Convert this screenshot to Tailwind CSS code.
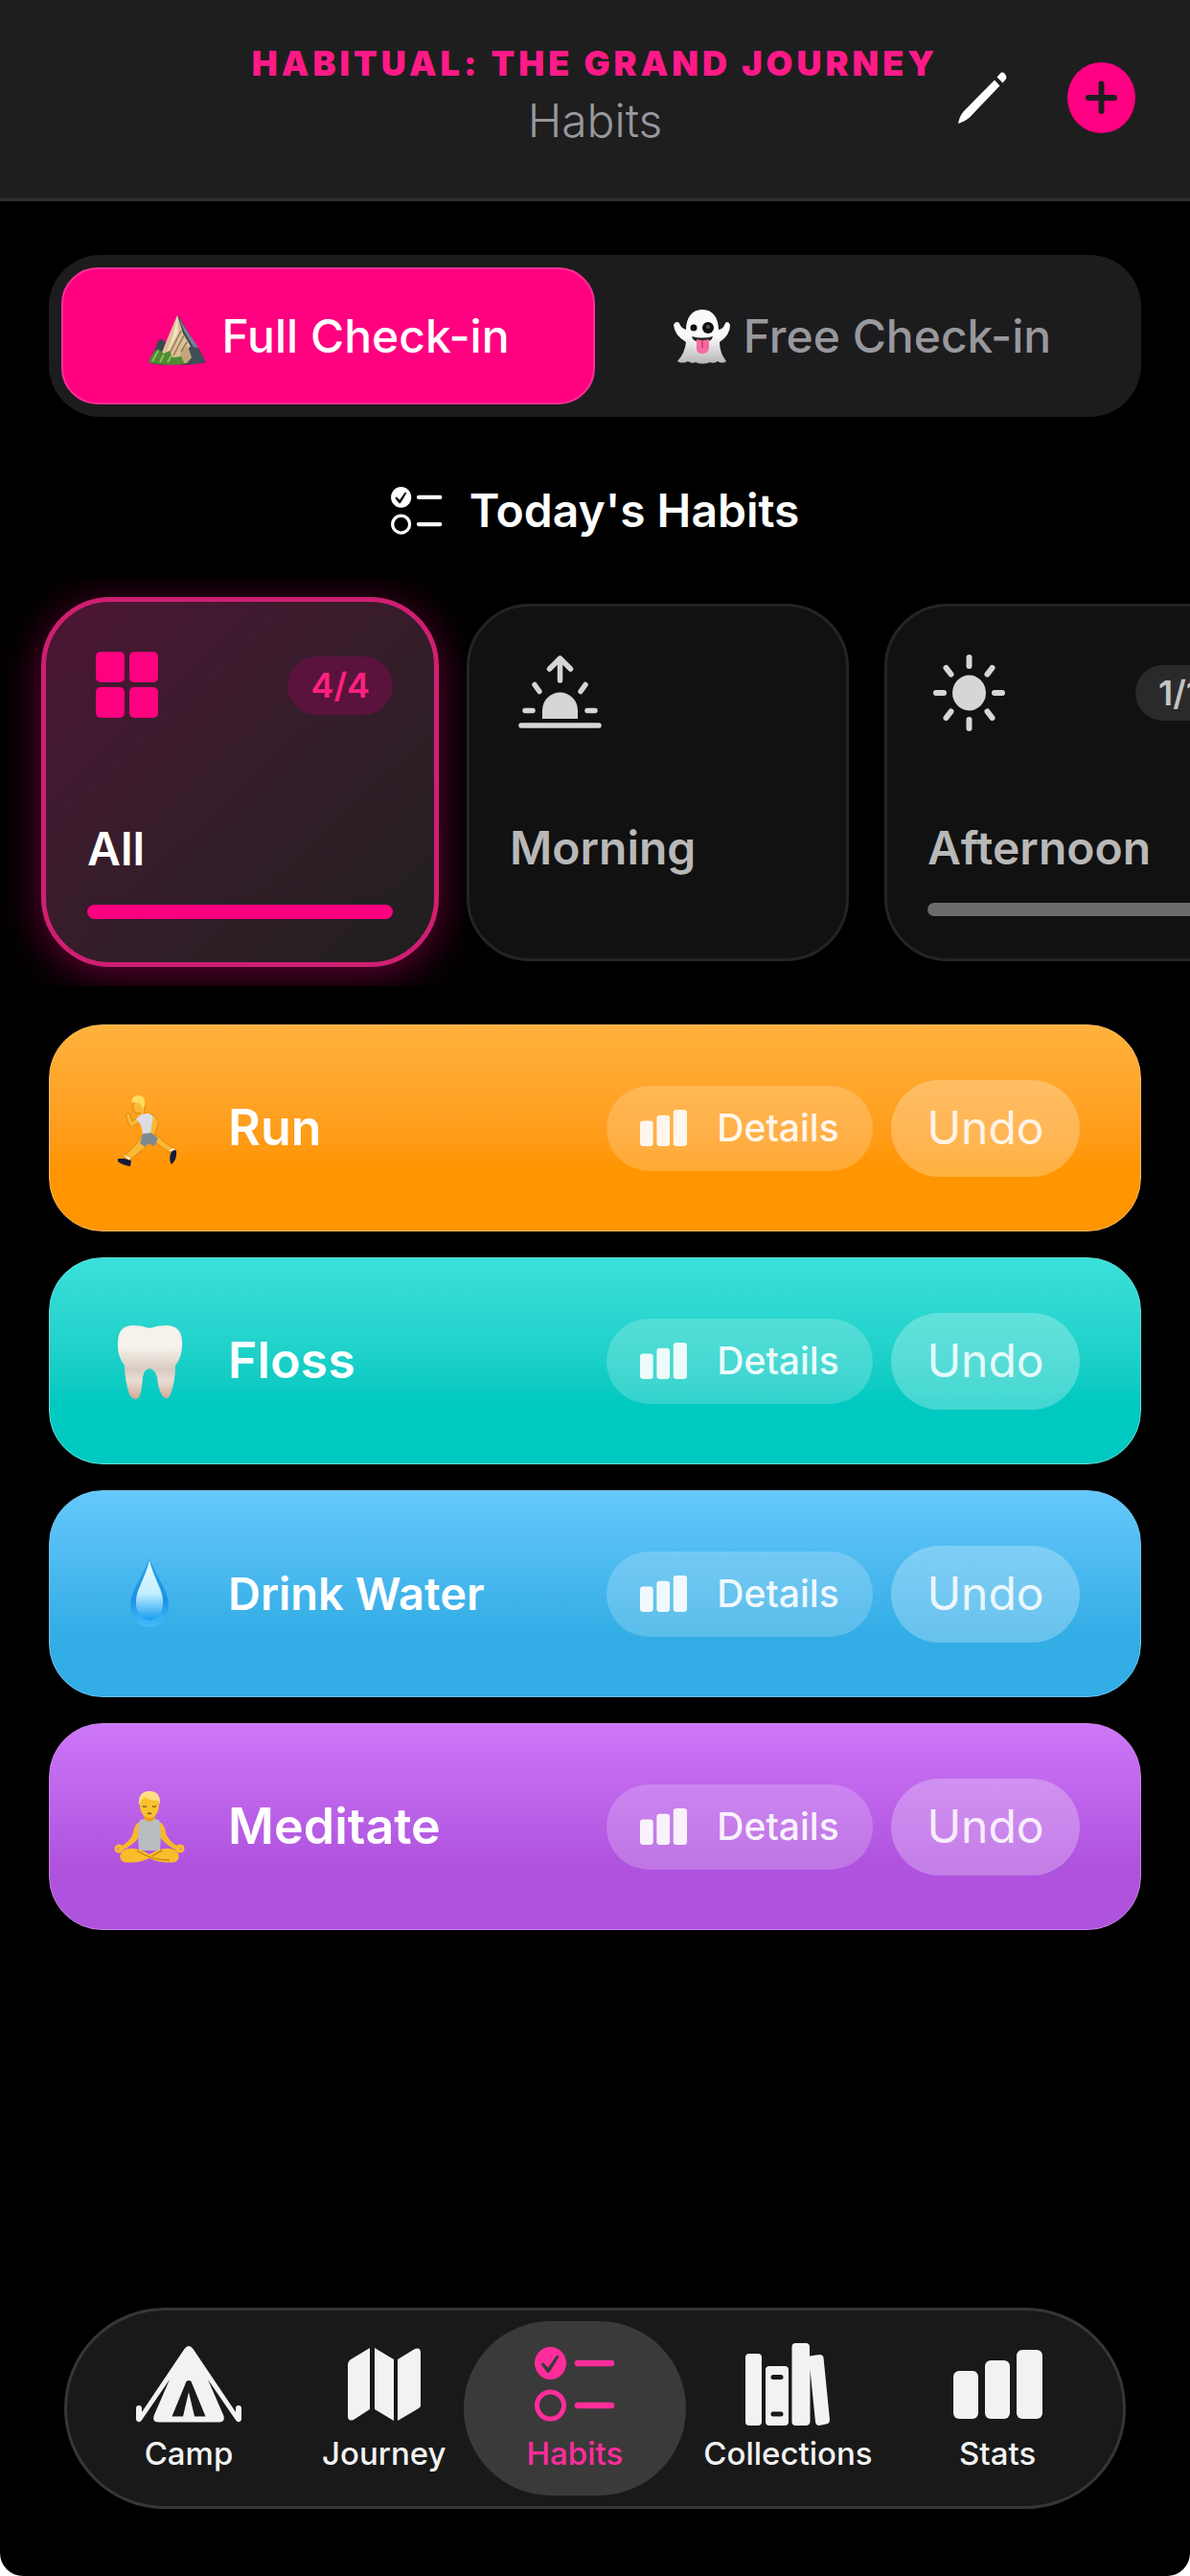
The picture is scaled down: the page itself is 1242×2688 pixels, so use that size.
<!DOCTYPE html>
<html lang="en" class="bg-white">
<head>
    <meta charset="UTF-8">
    <meta name="viewport" content="width=device-width, initial-scale=1.0">
    <title>Habitual - Habits</title>
    <script src="https://cdn.jsdelivr.net/npm/@tailwindcss/browser@4"></script>
</head>
<body class="flex min-h-screen flex-col overflow-x-hidden rounded-b-3xl bg-black font-[Inter,Roboto,sans-serif] text-white">

    <!-- Shared icons -->
    <svg class="hidden" aria-hidden="true">
        <symbol id="icon-bars" viewBox="0 0 93 72">
            <rect y="22" width="26" height="50" rx="6"/>
            <rect x="33" y="11" width="26" height="61" rx="6"/>
            <rect x="66" width="27" height="72" rx="6"/>
        </symbol>
        <symbol id="icon-checklist" viewBox="0 0 84 78">
            <path fill-rule="evenodd" d="M16.500 0a16.500 17 0 1 0 0 34a16.500 17 0 1 0 0-34zM22.500 9.500q1.800-1.600 3 .4L15.800 26q-1.600 1.800-3.200 0L7.200 19q-.6-2.400 1.900-2.600L14 21.500z"/>
            <circle cx="16.500" cy="61" r="14" fill="none" stroke="currentColor" stroke-width="5"/>
            <path d="M45 17h35M45 61h35" fill="none" stroke="currentColor" stroke-width="6.500" stroke-linecap="round"/>
        </symbol>
    </svg>

    <header class="grid grid-cols-[1fr_auto_1fr] items-center border-b-3 border-[#303031] bg-[#1e1e1f] pt-[42px] pb-[45px]">
        <div></div>
        <div class="text-center">
            <p class="text-[36px] leading-[48px] font-black tracking-[4px] text-[#ff1a88]">HABITUAL: THE GRAND JOURNEY</p>
            <h1 class="text-[48px] leading-[72px] font-light text-[#98989d]">Habits</h1>
        </div>
        <div class="flex items-center justify-end gap-[63px] pr-[57px]">
            <button type="button" aria-label="Edit">
                <svg class="h-[54px] w-[51px]" viewBox="0 0 51 54" fill="#fff">
                    <path d="M38 8.500L43.500 14.500L12 47.500Q8 51 0 54Q1.500 46 5.500 41.500z"/>
                    <path d="M40.500 5.500L43.800 1.700Q46.200-.6 48.800 2Q51.500 5 49.500 8L46.500 11.500z"/>
                </svg>
            </button>
            <button type="button" aria-label="Add habit">
                <svg class="h-[74px] w-[71px]" viewBox="0 0 71 74">
                    <ellipse cx="35.500" cy="37" rx="35.500" ry="37" fill="#ff0082"/>
                    <path d="M35.500 22.500v28.500M22 37h27" stroke="#1e1e1f" stroke-width="6" stroke-linecap="round"/>
                </svg>
            </button>
        </div>
    </header>

    <main class="px-[51px] pt-14">
        <!-- Check-in mode -->
        <div class="grid grid-cols-2 rounded-[54px] bg-[#1c1c1e] p-[13px]">
            <button type="button" class="flex h-[143px] items-center justify-center gap-4 rounded-[38px] border-2 border-[#ff2f98] bg-[#ff0080] text-[48px] font-medium">
                <svg class="h-[60px] w-[62px]" viewBox="0 0 62 60">
                    <path d="M2 57L10 40Q12 32 16 33L21 37L32 8L41 22L54 42L62 57Q45 61 30 59Q10 61 2 57z" fill="#3c474c"/>
                    <path d="M32 8L21 34L12 57L32 59L46 40L38 26z" fill="#dcc198"/>
                    <path d="M32 8L33 26L20 50L28 28z" fill="#f4e2c0"/>
                    <path d="M33 8L41 22L62 57Q52 60 40 58L47 42L38 27z" fill="#3f4f55"/>
                    <path d="M33 10L54 42L49 41L39 24z" fill="#73849a"/>
                    <path d="M36 46L43 40L47 52L42 58H32z" fill="#c4a57a"/>
                    <path d="M36 24L24 48M39 29L28 50M42 36L36 46" stroke="#94784f" stroke-width="1.500"/>
                    <path d="M2 57Q6 46 12 43L18 48L24 45L27 52L36 51L40 59Q18 61 2 57z" fill="#4f8a35"/>
                    <path d="M6 56L12 45M14 57L18 49M22 57L26 50" stroke="#8fbf55" stroke-width="2"/>
                </svg>
                Full Check-in
            </button>
            <button type="button" class="flex h-[143px] items-center justify-center gap-3 text-[48px] font-medium text-[#98989d]">
                <svg class="h-[58px] w-[62px]" viewBox="0 0 62 58">
                    <defs>
                        <linearGradient id="ghost" x1="0" y1="0" x2="0" y2="1">
                            <stop offset=".5" stop-color="#fafafa"/>
                            <stop offset="1" stop-color="#b5b5b8"/>
                        </linearGradient>
                    </defs>
                    <path d="M31 1C42 1 48 10 48 22C52 22 54 18 55 15Q58 12 60 17Q60 28 49 35Q49 46 56 55Q52 58 47 55Q43 58 39 56Q31 59 24 56Q20 58 16 55Q10 58 5 55Q13 46 14 35Q2 28 1 17Q3 12 7 15Q8 20 14 22C14 10 20 1 31 1z" fill="url(#ghost)"/>
                    <circle cx="22" cy="20" r="3.500" fill="#111"/>
                    <circle cx="37" cy="20" r="6" fill="#111"/>
                    <circle cx="37" cy="19" r="2" fill="#555"/>
                    <path d="M20 29Q31 32 42 29Q41 35 31 35Q21 35 20 29z" fill="#222"/>
                    <path d="M25 32Q31 34 38 32V41Q37 47 31 47Q25 47 25 41z" fill="#f7699f"/>
                    <path d="M31 33v8" stroke="#c9376f" stroke-width="1.500"/>
                </svg>
                Free Check-in
            </button>
        </div>

        <h2 class="mt-[68px] flex items-center justify-center gap-7 text-[48px] leading-[60px] font-semibold">
            <svg class="h-[50px] w-[54px]" fill="currentColor"><use href="#icon-checklist"/></svg>
            Today's Habits
        </h2>

        <!-- Time of day filter -->
        <div class="-mx-[51px] mt-10 flex items-center gap-[37px] overflow-hidden py-5 pl-[43px]">
            <button type="button" class="-mr-2 flex h-[386px] w-[415px] shrink-0 flex-col justify-between rounded-[72px] border-5 border-[#cf1f72] bg-linear-to-br from-[#4d1534] via-[#351d2a] to-[#1f1f1f] px-[43px] pt-[52px] pb-[45px] text-left shadow-[0_8px_44px_#ff008066]">
                <span class="flex items-center justify-between">
                    <svg class="h-[70px] w-[84px]" viewBox="0 0 84 70" fill="#ff0080">
                        <rect x="9" width="30" height="32" rx="5"/>
                        <rect x="44" width="30" height="32" rx="5"/>
                        <rect x="9" y="37" width="30" height="32" rx="5"/>
                        <rect x="44" y="37" width="30" height="32" rx="5"/>
                    </svg>
                    <span class="rounded-full bg-[#59133c] px-6 text-[36px] leading-[61px] font-semibold text-[#ff2080]">4/4</span>
                </span>
                <span class="block">
                    <span class="block text-[48px] leading-[60px] font-semibold">All</span>
                    <span class="mt-7 block h-[15px] rounded-full bg-[#ff0080]"></span>
                </span>
            </button>
            <button type="button" class="flex h-[373px] w-[399px] shrink-0 flex-col justify-between rounded-[66px] border-3 border-[#242424] bg-[#111] px-[42px] pt-[51px] pb-[44px] text-left">
                <svg class="h-[76px] w-[97px]" viewBox="0 0 97 76" fill="#d6d6d6">
                    <path d="M34 66v-9a18.500 18.500 0 0 1 37 0v9z"/>
                    <path d="M12 73h81M16 57.500h8M81 57.500h8M26 30.500l5 7M79 30.500l-5 7M52.500 26V4M41.500 14L52.500 3L63.500 14" fill="none" stroke="#d6d6d6" stroke-width="5.500" stroke-linecap="round" stroke-linejoin="round"/>
                </svg>
                <span class="block pb-[41px] text-[48px] leading-[60px] font-semibold text-[#b8b8b8]">Morning</span>
            </button>
            <button type="button" class="flex h-[373px] w-[399px] shrink-0 flex-col justify-between rounded-[66px] border-3 border-[#242424] bg-[#111] px-[42px] pt-[50px] pb-[44px] text-left">
                <span class="flex items-center justify-between">
                    <svg class="h-[80px] w-[84px]" viewBox="0 0 84 80" fill="#d6d6d6">
                        <ellipse cx="43.500" cy="40" rx="17.500" ry="18.500"/>
                        <path d="M43.500 3v9M43.500 68v9M9 40h8M70 40h8M19.500 14l5 6.500M67.500 14l-5 6.500M19.500 66l5-6.500M67.500 66l-5-6.500" stroke="#d6d6d6" stroke-width="6" stroke-linecap="round"/>
                    </svg>
                    <span class="rounded-full bg-[#2a2a2a] px-6 text-[36px] leading-[58px] font-semibold text-[#c4c4c4]">1/1</span>
                </span>
                <span class="block">
                    <span class="block text-[48px] leading-[60px] font-semibold text-[#b8b8b8]">Afternoon</span>
                    <span class="mt-[27px] block h-[14px] rounded-full bg-[#6b6b6b]"></span>
                </span>
            </button>
        </div>

        <!-- Habit list -->
        <ul class="mt-10 space-y-[27px]">
            <li class="flex h-[216px] items-center rounded-[56px] border border-[#ffb860] bg-linear-to-b from-[#ffb23c] to-[#ff9500] to-70% px-[63px]">
                <svg class="mr-[41px] h-[82px] w-[82px]" viewBox="0 0 82 82">
                    <g fill="#fbb834" stroke="#d98a12" stroke-width="1" stroke-linejoin="round">
                        <path d="M33 49L28 57L16 69L22 73L36 62L44 52z"/>
                        <path d="M41 51L54 61L63 67L66 62L58 57L49 49z"/>
                        <path d="M31 29L23 34L20 26Q16 24 17 30L20 38Q22 41 26 38L33 34z"/>
                        <path d="M43 26Q53 33 49 40L46 49L41 47L43 38L39 32z"/>
                        <path d="M24 16Q23 21 25 24Q28 27 31 25L33 28L36 25L36 14L30 11z"/>
                    </g>
                    <path d="M27 32Q31 25 40 26Q46 27 44 34Q43 41 42 48L34 49Q34 40 30 35z" fill="#dcdce4"/>
                    <path d="M34 47L43 46L50 52L46 60L39 57L37 61L31 57z" fill="#7f8993"/>
                    <path d="M22 14Q23 7 30 7Q38 8 36 18L34 21L31 15Q27 15 22 14z" fill="#ffdc62"/>
                    <path d="M14 69L21 72L20 75zM61 65L66 62L68 65z" fill="#fff"/>
                    <path d="M8 73L15 73L22 75L21 81Q13 80 8 76zM63 68Q66 62 69 65Q70 74 64 79Q61 75 63 68z" fill="#161b3c"/>
                </svg>
                <span class="flex-1 text-[52px] font-semibold">Run</span>
                <button type="button" class="mr-[19px] flex h-[89px] w-[278px] items-center justify-center gap-[31px] rounded-full bg-white/20 text-[39px] font-medium text-white/90">
                    <svg class="h-[38px] w-[49px]" fill="currentColor"><use href="#icon-bars"/></svg>
                    Details
                </button>
                <button type="button" class="h-[101px] w-[197px] rounded-full bg-white/26 text-[48px] text-white/85">Undo</button>
            </li>
            <li class="flex h-[216px] items-center rounded-[56px] border border-[#62dcd6] bg-linear-to-b from-[#3ae0da] to-[#00c9c1] to-70% px-[63px]">
                <svg class="mr-[41px] h-[82px] w-[82px]" viewBox="0 0 82 82">
                    <defs>
                        <linearGradient id="tooth" x1="0" y1="0" x2="0" y2="1">
                            <stop offset=".3" stop-color="#f6f1ea"/>
                            <stop offset=".6" stop-color="#d8cbc0"/>
                            <stop offset=".75" stop-color="#e9ddd4"/>
                            <stop offset="1" stop-color="#d3a892"/>
                        </linearGradient>
                    </defs>
                    <path d="M8 22Q8 4 24 4Q33 4 41 7Q50 4 58 4Q74 4 75 20Q76 36 68 46Q68 62 63 76Q59 84 54 77Q50 70 49 58Q47 50 41 49Q35 50 34 58Q33 74 30 79Q25 84 20 76Q15 60 15 46Q7 36 8 22z" fill="url(#tooth)"/>
                </svg>
                <span class="flex-1 text-[52px] font-semibold">Floss</span>
                <button type="button" class="mr-[19px] flex h-[89px] w-[278px] items-center justify-center gap-[31px] rounded-full bg-white/20 text-[39px] font-medium text-white/90">
                    <svg class="h-[38px] w-[49px]" fill="currentColor"><use href="#icon-bars"/></svg>
                    Details
                </button>
                <button type="button" class="h-[101px] w-[197px] rounded-full bg-white/26 text-[48px] text-white/85">Undo</button>
            </li>
            <li class="flex h-[216px] items-center rounded-[56px] border border-[#6fc4ec] bg-linear-to-b from-[#64c8fb] to-[#32ade6] to-70% px-[63px]">
                <svg class="mr-[41px] h-[82px] w-[82px]" viewBox="0 0 82 82">
                    <defs>
                        <linearGradient id="drop" x1="0" y1="0" x2="0" y2="1">
                            <stop offset="0" stop-color="#2ba2e8"/>
                            <stop offset=".6" stop-color="#1b93e6"/>
                            <stop offset="1" stop-color="#45bdf8"/>
                        </linearGradient>
                        <linearGradient id="drop-inner" x1="0" y1="0" x2="0" y2="1">
                            <stop offset="0" stop-color="#e8fbff"/>
                            <stop offset=".55" stop-color="#c2eeff"/>
                            <stop offset="1" stop-color="#129cf2"/>
                        </linearGradient>
                    </defs>
                    <path d="M41 4Q44 12 53 29Q61 43 61 54Q60 74 41 76Q22 74 21 54Q21 43 29 29Q38 12 41 4z" fill="url(#drop)"/>
                    <path d="M41 6Q43 15 50 31Q56 43 55 53Q53 67 41 69Q29 67 27 53Q26 43 32 31Q39 15 41 6z" fill="url(#drop-inner)"/>
                </svg>
                <span class="flex-1 text-[47px] font-semibold">Drink Water</span>
                <button type="button" class="mr-[19px] flex h-[89px] w-[278px] items-center justify-center gap-[31px] rounded-full bg-white/20 text-[39px] font-medium text-white/90">
                    <svg class="h-[38px] w-[49px]" fill="currentColor"><use href="#icon-bars"/></svg>
                    Details
                </button>
                <button type="button" class="h-[101px] w-[197px] rounded-full bg-white/26 text-[48px] text-white/85">Undo</button>
            </li>
            <li class="flex h-[216px] items-center rounded-[56px] border border-[#c583e6] bg-linear-to-b from-[#cd77f8] to-[#af52de] to-70% px-[63px]">
                <svg class="mr-[41px] h-[82px] w-[82px]" viewBox="0 0 82 82">
                    <path d="M31 36Q25 38 24 48Q20 58 8 63L10 67Q26 60 31 50zM51 36Q57 38 58 48Q62 58 74 63L72 67Q56 60 51 50z" fill="#f7b92b"/>
                    <path d="M35 27H47V37H35z" fill="#e79b16"/>
                    <path d="M31 34L36 33Q41 39 46 33L51 34Q54 44 52 66H30Q28 44 31 34z" fill="#b9bdc2"/>
                    <path d="M13 66Q25 60 41 70Q57 60 69 66Q75 74 68 78Q54 80 41 74Q28 80 14 78Q7 74 13 66z" fill="#f9bc2a"/>
                    <path d="M28 66Q42 76 62 76M54 66Q48 69 44 72" fill="none" stroke="#c98510" stroke-width="1.500"/>
                    <circle cx="9" cy="64" r="3" fill="none" stroke="#f9bc2a" stroke-width="3"/>
                    <circle cx="73" cy="64" r="3" fill="none" stroke="#f9bc2a" stroke-width="3"/>
                    <ellipse cx="41" cy="19" rx="10" ry="13" fill="#fbc22e"/>
                    <path d="M30 18Q29 4 41 4Q53 4 52 18L50 14Q42 14 36 10Q32 13 31 18z" fill="#ffdf83"/>
                    <path d="M34 19.500q2 1.500 4 0M44 19.500q2 1.500 4 0M39 27q2 1 4 0" fill="none" stroke="#8a5a10" stroke-width="1.500"/>
                </svg>
                <span class="flex-1 text-[52px] font-semibold">Meditate</span>
                <button type="button" class="mr-[19px] flex h-[89px] w-[278px] items-center justify-center gap-[31px] rounded-full bg-white/20 text-[39px] font-medium text-white/90">
                    <svg class="h-[38px] w-[49px]" fill="currentColor"><use href="#icon-bars"/></svg>
                    Details
                </button>
                <button type="button" class="h-[101px] w-[197px] rounded-full bg-white/26 text-[48px] text-white/85">Undo</button>
            </li>
        </ul>
    </main>

    <!-- Tab bar -->
    <nav class="mx-[67px] mt-auto mb-[70px] flex items-center justify-between rounded-full border-3 border-[#363636] bg-[#191919] py-[11px] pr-11 pl-[30px] text-[33px] leading-10 font-medium text-[#f2f2f2]">
        <a href="#" class="flex flex-col items-center gap-2 px-[42px] pt-[22px] pb-6">
            <svg class="h-[88px] w-[110px]" viewBox="0 -4 110 88" fill="currentColor">
                <path fill-rule="evenodd" d="M50.500 3Q55 -3 59.500 3L104 69V65Q104 62 107 62Q110 62 110 65V77Q108 81 104.500 78L75 35L91.500 73Q93 79.500 87 79.500H23Q17 79.500 18.500 73L35 35L5.500 78Q2 81 0 77V65Q0 62 3 62Q6 62 6 65V69zM52.500 37L37.500 73.500H49L55 48L61 73.500H72.500L57.500 37Q55 35 52.500 37z"/>
            </svg>
            Camp
        </a>
        <a href="#" class="flex flex-col items-center gap-2 px-[42px] pt-[22px] pb-6">
            <svg class="h-[88px] w-[76px]" viewBox="0 -6 76 88" fill="currentColor">
                <path d="M0 17Q0 14 3 12L23 0V64L6 75Q0 77 0 71zM28 0L48 12V76L28 64zM52 12L70 1Q76-1 76 5V60Q76 62 74 63L52 76z"/>
            </svg>
            Journey
        </a>
        <a href="#" aria-current="page" class="-mx-6 flex flex-col items-center gap-2 rounded-full bg-[#3a3a3a] px-[66px] pt-[22px] pb-6 text-[#ff2d9b]">
            <svg class="h-[88px] w-[84px]" fill="currentColor"><use href="#icon-checklist"/></svg>
            Habits
        </a>
        <a href="#" class="flex flex-col items-center gap-2 px-[42px] pt-[22px] pb-6">
            <svg class="h-[88px] w-[89px]" viewBox="0 -1 89 88" fill="currentColor">
                <rect y="11" width="17" height="75" rx="4"/>
                <path fill-rule="evenodd" d="M25 24H41Q45 24 45 28V82Q45 86 41 86H25Q21 86 21 82V28Q21 24 25 24zM29 33a2.500 2.500 0 0 0 0 5H37a2.500 2.500 0 0 0 0-5zM29 71.500a2.500 2.500 0 0 0 0 5H37a2.500 2.500 0 0 0 0-5z"/>
                <path d="M52.500 0H63Q67 0 67 4V13.500L77 12Q81 12 81.500 15L88 80Q88 84 84 84.500L77 86Q73.500 86 73 82L67.500 28V82Q67 86 63 86H52.500Q48.500 86 48.500 82V4Q48.500 0 52.500 0z"/>
            </svg>
            Collections
        </a>
        <a href="#" class="flex flex-col items-center gap-2 px-[42px] pt-[22px] pb-6">
            <svg class="h-[88px] w-[93px] py-2" fill="currentColor"><use href="#icon-bars"/></svg>
            Stats
        </a>
    </nav>
</body>
</html>
